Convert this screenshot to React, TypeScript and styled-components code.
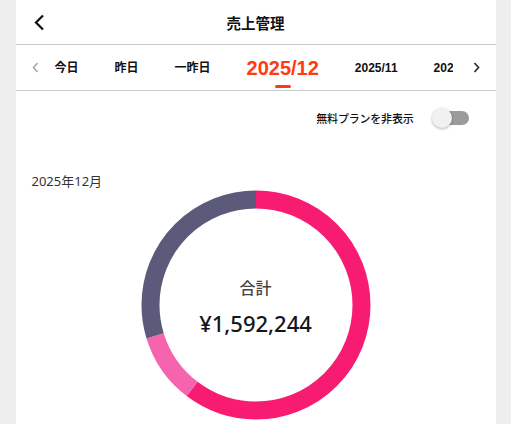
import React from 'react';
import styled, { createGlobalStyle } from 'styled-components';

const GlobalStyle = createGlobalStyle`
  html, body {
    margin: 0;
    padding: 0;
    background: #eeeeee;
    font-family: 'Noto Sans', 'Noto Sans CJK JP', sans-serif;
    color: #222;
  }
`;

const Page = styled.div`
  width: 480px;
  min-height: 100vh;
  margin: 0 auto;
  background: #fff;
  display: flex;
  flex-direction: column;
`;

const Header = styled.header`
  height: 44px;
  border-bottom: 1px solid #cccccc;
  display: grid;
  grid-template-columns: 44px 1fr 44px;
  align-items: center;
`;

const BackButton = styled.button`
  border: 0;
  background: none;
  padding: 0 0 0 18px;
  height: 44px;
  display: flex;
  align-items: center;
  cursor: pointer;
`;

const Title = styled.h1`
  margin: 0;
  text-align: center;
  font-family: 'Noto Sans CJK JP', sans-serif;
  font-size: 14.5px;
  font-weight: 700;
  color: #111;
`;

const TabRow = styled.nav`
  height: 45px;
  border-bottom: 1px solid #cccccc;
  display: flex;
  align-items: center;
  padding: 0 9px 0 10px;
`;

const Arrow = styled.button<{ $muted?: boolean }>`
  width: 20px;
  height: 45px;
  border: 0;
  padding: 0;
  background: none;
  display: flex;
  align-items: center;
  justify-content: center;
  color: ${(p) => (p.$muted ? '#a8a8a8' : '#333')};
`;

const Scroller = styled.div`
  flex: 1;
  margin-right: 14px;
  padding-left: 9px;
  height: 45px;
  display: flex;
  align-items: center;
  gap: 36px;
  overflow: hidden;
  white-space: nowrap;
`;

const Tab = styled.span<{ $active?: boolean }>`
  position: relative;
  flex: none;
  font-family: 'Liberation Sans', 'Noto Sans CJK JP', sans-serif;
  font-weight: 700;
  font-size: ${(p) => (p.$active ? '20px' : '12px')};
  color: ${(p) => (p.$active ? '#ff3b12' : '#111')};
  line-height: 1;
  padding-top: ${(p) => (p.$active ? '1px' : '0')};

  &::after {
    content: '';
    display: ${(p) => (p.$active ? 'block' : 'none')};
    position: absolute;
    left: 50%;
    bottom: -10px;
    width: 16px;
    height: 3px;
    margin-left: -8px;
    border-radius: 2px;
    background: #ff3b12;
  }
`;

const Content = styled.main`
  padding: 17px 27px 0 16px;
  display: flex;
  flex-direction: column;
`;

const ToggleRow = styled.div`
  display: flex;
  justify-content: flex-end;
  align-items: center;
  gap: 18px;
  height: 20px;
`;

const ToggleLabel = styled.span`
  font-family: 'Noto Sans CJK JP', sans-serif;
  font-size: 11px;
  font-weight: 500;
  color: #111;
  letter-spacing: -0.2px;
`;

const Switch = styled.span`
  position: relative;
  width: 37px;
  height: 20px;
  display: flex;
  align-items: center;
`;

const Track = styled.span`
  margin-left: 3px;
  width: 34px;
  height: 14px;
  border-radius: 7px;
  background: #9b9b9b;
`;

const Knob = styled.span`
  position: absolute;
  left: 0;
  top: 0;
  width: 20px;
  height: 20px;
  border-radius: 50%;
  background: #f1f1f1;
  box-shadow: 0 1px 3px rgba(0, 0, 0, 0.3);
`;

const PeriodLabel = styled.div`
  margin-top: 44px;
  font-size: 13px;
  color: #333;
  line-height: 18px;
`;

const ChartWrap = styled.div`
  align-self: center;
  margin-left: 11px;
  display: grid;
  width: 230px;
  height: 230px;

  & > * {
    grid-area: 1 / 1;
  }
`;

const Center = styled.div`
  display: flex;
  flex-direction: column;
  align-items: center;
  justify-content: center;
  padding-top: 2px;
`;

const TotalLabel = styled.div`
  font-family: 'Noto Sans CJK JP', sans-serif;
  font-size: 16px;
  font-weight: 500;
  color: #454545;
  line-height: 20px;
`;

const TotalValue = styled.div`
  margin-top: 13px;
  font-family: 'Noto Sans', sans-serif;
  font-size: 22px;
  font-weight: 500;
  color: #151520;
  line-height: 26px;
`;

const segments = [
  { color: '#f81b72', value: 60.3 },
  { color: '#f564ad', value: 9.9 },
  { color: '#5c5a7b', value: 29.8 },
];

const Donut = () => {
  const r = 105.5;
  const c = 2 * Math.PI * r;
  let offset = 0;
  return (
    <svg width="230" height="230" viewBox="0 0 230 230">
      <g transform="rotate(-90 115 115)">
        {segments.map((s) => {
          const len = (s.value / 100) * c;
          const el = (
            <circle
              key={s.color}
              cx="115"
              cy="115"
              r={r}
              fill="none"
              stroke={s.color}
              strokeWidth="18"
              strokeDasharray={`${len} ${c - len}`}
              strokeDashoffset={-offset}
            />
          );
          offset += len;
          return el;
        })}
      </g>
    </svg>
  );
};

const tabs = ['今日', '昨日', '一昨日', '2025/12', '2025/11', '2025/10'];

const App = () => (
  <>
    <GlobalStyle />
    <Page>
      <Header>
        <BackButton aria-label="戻る">
          <svg width="11" height="17" viewBox="0 0 11 17">
            <polyline points="9,1.5 2,8.5 9,15.5" fill="none" stroke="#111" strokeWidth="2.2" />
          </svg>
        </BackButton>
        <Title>売上管理</Title>
        <span />
      </Header>
      <TabRow>
        <Arrow $muted aria-label="前へ">
          <svg width="7" height="11" viewBox="0 0 7 11">
            <polyline points="5.5,1 1.5,5.5 5.5,10" fill="none" stroke="currentColor" strokeWidth="1.6" />
          </svg>
        </Arrow>
        <Scroller>
          {tabs.map((t) => (
            <Tab key={t} $active={t === '2025/12'}>
              {t}
            </Tab>
          ))}
        </Scroller>
        <Arrow aria-label="次へ">
          <svg width="7" height="11" viewBox="0 0 7 11">
            <polyline points="1.5,1 5.5,5.5 1.5,10" fill="none" stroke="currentColor" strokeWidth="1.8" />
          </svg>
        </Arrow>
      </TabRow>
      <Content>
        <ToggleRow>
          <ToggleLabel>無料プランを非表示</ToggleLabel>
          <Switch>
            <Track />
            <Knob />
          </Switch>
        </ToggleRow>
        <PeriodLabel>2025年12月</PeriodLabel>
        <ChartWrap>
          <Donut />
          <Center>
            <TotalLabel>合計</TotalLabel>
            <TotalValue>¥1,592,244</TotalValue>
          </Center>
        </ChartWrap>
      </Content>
    </Page>
  </>
);

export default App;
